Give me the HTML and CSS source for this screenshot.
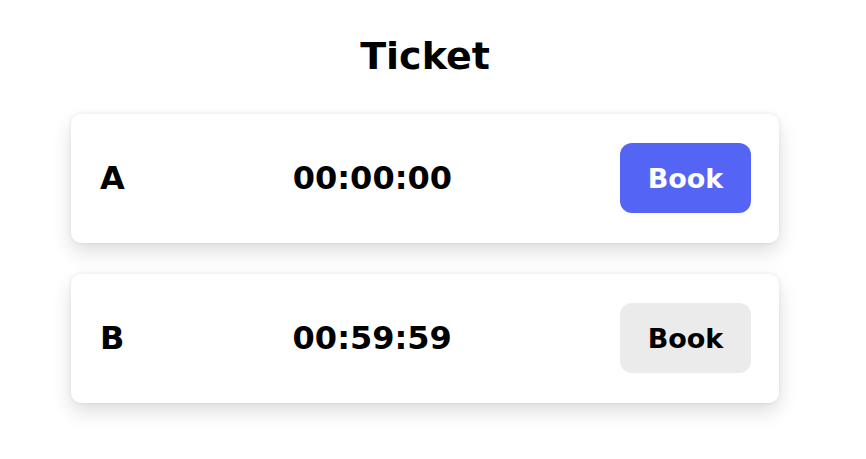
FILE: index.html
```html
<!DOCTYPE html>
<html>
<head>
<meta charset="utf-8">
<link rel="stylesheet" href="styles.css">
</head>
<body>
<main class="page">
  <h1 class="title">Ticket</h1>
  <div class="list">
    <div class="card">
      <span class="label">A</span>
      <span class="timer">00:00:00</span>
      <button class="btn btn-active">Book</button>
    </div>
    <div class="card">
      <span class="label">B</span>
      <span class="timer">00:59:59</span>
      <button class="btn btn-idle">Book</button>
    </div>
  </div>
</main>
</body>
</html>
```

FILE: styles.css
```css
html, body {
  margin: 0;
  padding: 0;
  background: #ffffff;
}
body {
  font-family: "DejaVu Sans", "Lato", sans-serif;
  color: #000;
}
.page {
  width: 850px;
  padding-bottom: 56px;
  display: flex;
  flex-direction: column;
  align-items: center;
}
.title {
  margin: 33px 0 0 0;
  font-size: 38px;
  line-height: 46px;
  font-weight: 700;
}
.list {
  margin-top: 35px;
  display: flex;
  flex-direction: column;
  gap: 31px;
  width: 708px;
}
.card {
  box-sizing: border-box;
  height: 129px;
  padding: 29px 28px 30px 29px;
  display: flex;
  align-items: center;
  justify-content: space-between;
  background: #fff;
  border-radius: 10px;
  box-shadow: 0 9px 20px rgba(0, 0, 0, 0.13), 0 0 4px rgba(0, 0, 0, 0.08);
}
.label {
  font-size: 32px;
  font-weight: 700;
}
.timer {
  font-size: 32px;
  font-weight: 700;
}
.btn {
  width: 131px;
  height: 70px;
  border: none;
  border-radius: 12px;
  font-family: inherit;
  font-size: 27px;
  font-weight: 700;
}
.btn-active {
  background: #5465f5;
  color: #fff;
}
.btn-idle {
  background: #ebebeb;
  color: #000;
}
```
